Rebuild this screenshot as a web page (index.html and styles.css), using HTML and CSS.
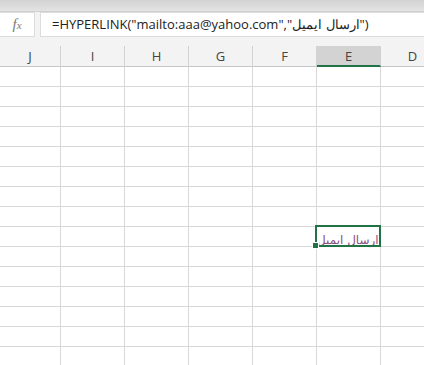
FILE: index.html
```html
<!DOCTYPE html>
<html lang="en">
<head>
    <meta charset="UTF-8">
    <title>Sheet</title>
    <link rel="stylesheet" href="styles.css">
</head>
<body>
    <div class="formula-area">
        <div class="top-band"></div>
        <div class="formula-bar">
            <div class="fx-box"><span class="fx">f<span class="fx-x">x</span></span></div>
            <div class="formula-input">=HYPERLINK("mailto:aaa@yahoo.com","ارسال ایمیل")</div>
        </div>
    </div>

    <div class="sheet">
        <div class="col-head">J</div>
        <div class="col-head">I</div>
        <div class="col-head">H</div>
        <div class="col-head">G</div>
        <div class="col-head">F</div>
        <div class="col-head active">E</div>
        <div class="col-head">D</div>
    </div>
    <div class="sheet" id="cells"></div>

    <script>
        // build 15 rows x 7 columns, selected cell is E9
        const cells = document.getElementById('cells');
        for (let r = 1; r <= 15; r++) {
            for (let c = 0; c < 7; c++) {
                const cell = document.createElement('div');
                cell.className = 'cell';
                if (r === 9 && c === 5) {
                    cell.classList.add('selected');
                    cell.innerHTML = '<a class="link" href="#" dir="rtl">ارسال ایمیل</a><span class="handle"></span>';
                }
                cells.appendChild(cell);
            }
        }
    </script>
</body>
</html>
```

FILE: styles.css
```css
* {
    margin: 0;
    padding: 0;
    box-sizing: border-box;
}

body {
    background: #fff;
    font-family: 'Open Sans', 'Noto Sans', sans-serif;
    overflow: hidden;
}

.formula-area {
    background: #f3f3f3;
    height: 46px;
}

.top-band {
    height: 12px;
    background: linear-gradient(#d3d3d3, #e3e3e3);
    border-bottom: 1px solid #cfcfcf;
}

.formula-bar {
    display: flex;
    gap: 5px;
    height: 25px;
}

.fx-box {
    width: 35px;
    background: #fff;
    border: 1px solid #dcdcdc;
    border-left: none;
    display: flex;
    align-items: center;
    justify-content: center;
}

.fx {
    font-family: 'Liberation Serif', serif;
    font-style: italic;
    font-size: 15px;
    color: #7a7a7a;
}

.fx-x {
    font-size: 11px;
}

.formula-input {
    flex: 1;
    background: #fff;
    border: 1px solid #dcdcdc;
    border-right: none;
    padding-left: 11px;
    font-size: 13px;
    line-height: 23px;
    color: #222;
    white-space: nowrap;
}

.sheet {
    display: grid;
    grid-template-columns: 61px repeat(6, 64px);
}

.col-head {
    height: 21px;
    background: #f3f3f3;
    border-right: 1px solid #d2d2d2;
    border-bottom: 1px solid #c6c6c6;
    text-align: center;
    font-size: 13px;
    line-height: 20px;
    color: #444;
}

.col-head.active {
    background: #d3d3d3;
    border-bottom: 2px solid #217346;
}

.cell {
    height: 20px;
    border-right: 1px solid #d8d8d8;
    border-bottom: 1px solid #d8d8d8;
    position: relative;
}

.cell.selected {
    text-align: right;
    padding-right: 2px;
    white-space: nowrap;
}

.cell.selected::after {
    content: '';
    position: absolute;
    top: -2px;
    left: -2px;
    right: -1px;
    bottom: -1px;
    border: 2px solid #217346;
}

.link {
    font-family: 'DejaVu Sans', sans-serif;
    font-size: 12px;
    line-height: 19px;
    color: #8a4f7d;
    text-decoration: underline;
}

.handle {
    position: absolute;
    left: -5px;
    top: 15px;
    width: 7px;
    height: 7px;
    background: #217346;
    border: 1px solid #fff;
    z-index: 1;
}
```
